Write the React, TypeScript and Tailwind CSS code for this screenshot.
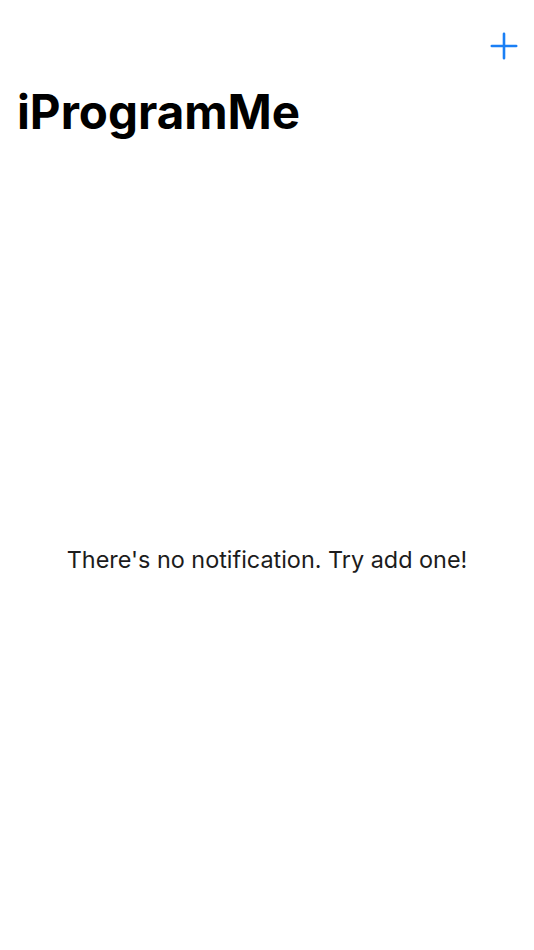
import React from 'react'

export default function App() {
  return (
    <div className="h-[950px] w-[534px] bg-white flex flex-col" style={{ fontFamily: 'Inter, "Noto Sans", sans-serif' }}>
      <div className="flex justify-end pt-[32px] pr-[16px]">
        <button className="w-[28px] h-[28px] flex items-center justify-center">
          <svg width="28" height="28" viewBox="0 0 28 28" fill="none">
            <path d="M14 1.8V26.2M1.8 14H26.2" stroke="#1a7ff5" strokeWidth="2.6" strokeLinecap="round" />
          </svg>
        </button>
      </div>
      <h1 className="px-[17px] mt-[24px] text-[47.5px] leading-[56px] font-bold text-black">iProgramMe</h1>
      <div className="flex-1 flex items-center justify-center pt-[30px]">
        <p className="text-[23.4px] text-[#1c1c1c]">There's no notification. Try add one!</p>
      </div>
    </div>
  )
}
